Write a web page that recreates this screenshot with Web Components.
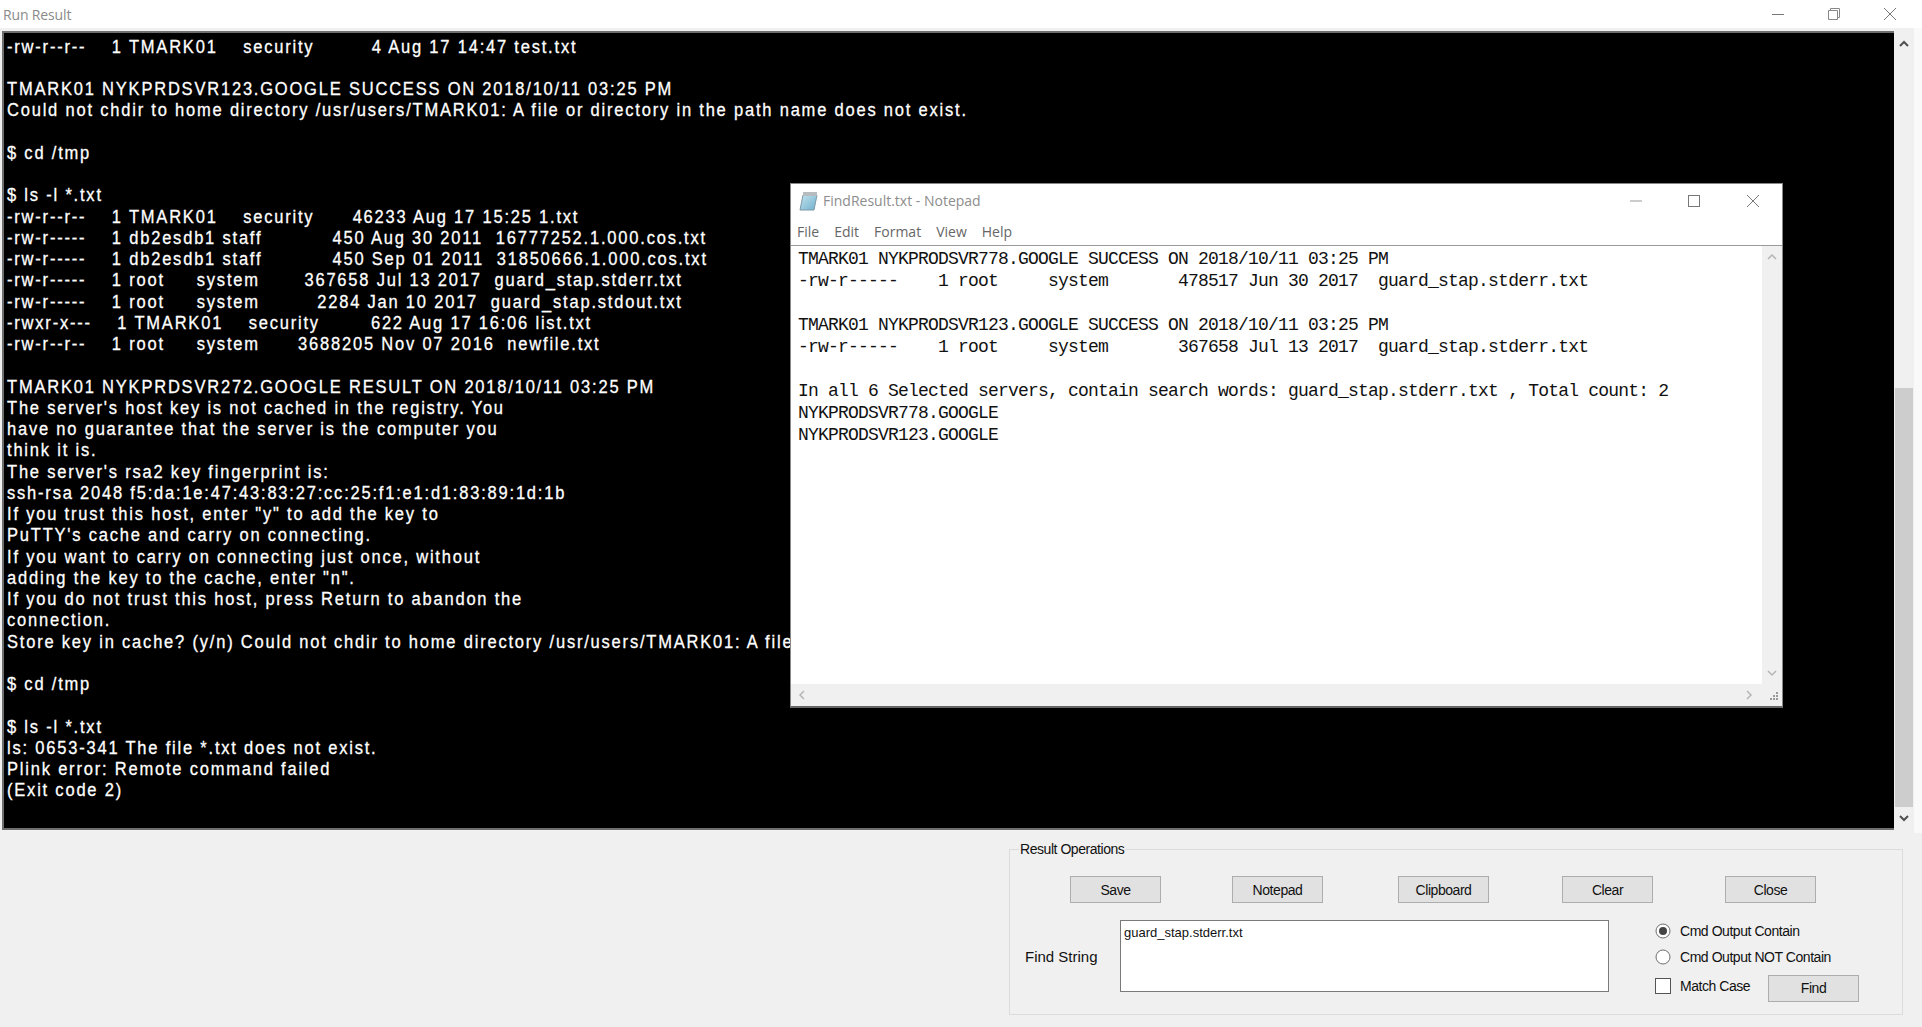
<!DOCTYPE html>
<html>
<head>
<meta charset="utf-8">
<title>Run Result</title>
<style>
  html, body { margin: 0; padding: 0; height: 100%; overflow: hidden; background: #fff; }
</style>
</head>
<body>
<run-result-app>
  <console-output slot="console">-rw-r--r--    1 TMARK01    security         4 Aug 17 14:47 test.txt

TMARK01 NYKPRDSVR123.GOOGLE SUCCESS ON 2018/10/11 03:25 PM
Could not chdir to home directory /usr/users/TMARK01: A file or directory in the path name does not exist.

$ cd /tmp

$ ls -l *.txt
-rw-r--r--    1 TMARK01    security      46233 Aug 17 15:25 1.txt
-rw-r-----    1 db2esdb1 staff           450 Aug 30 2011  16777252.1.000.cos.txt
-rw-r-----    1 db2esdb1 staff           450 Sep 01 2011  31850666.1.000.cos.txt
-rw-r-----    1 root     system       367658 Jul 13 2017  guard_stap.stderr.txt
-rw-r-----    1 root     system         2284 Jan 10 2017  guard_stap.stdout.txt
-rwxr-x---    1 TMARK01    security        622 Aug 17 16:06 list.txt
-rw-r--r--    1 root     system      3688205 Nov 07 2016  newfile.txt

TMARK01 NYKPRDSVR272.GOOGLE RESULT ON 2018/10/11 03:25 PM
The server's host key is not cached in the registry. You
have no guarantee that the server is the computer you
think it is.
The server's rsa2 key fingerprint is:
ssh-rsa 2048 f5:da:1e:47:43:83:27:cc:25:f1:e1:d1:83:89:1d:1b
If you trust this host, enter "y" to add the key to
PuTTY's cache and carry on connecting.
If you want to carry on connecting just once, without
adding the key to the cache, enter "n".
If you do not trust this host, press Return to abandon the
connection.
Store key in cache? (y/n) Could not chdir to home directory /usr/users/TMARK01: A file

$ cd /tmp

$ ls -l *.txt
ls: 0653-341 The file *.txt does not exist.
Plink error: Remote command failed
(Exit code 2)</console-output>
  <notepad-window slot="notepad">TMARK01 NYKPRODSVR778.GOOGLE SUCCESS ON 2018/10/11 03:25 PM
-rw-r-----    1 root     system       478517 Jun 30 2017  guard_stap.stderr.txt

TMARK01 NYKPRODSVR123.GOOGLE SUCCESS ON 2018/10/11 03:25 PM
-rw-r-----    1 root     system       367658 Jul 13 2017  guard_stap.stderr.txt

In all 6 Selected servers, contain search words: guard_stap.stderr.txt , Total count: 2
NYKPRODSVR778.GOOGLE
NYKPRODSVR123.GOOGLE</notepad-window>
  <result-operations slot="panel"></result-operations>
</run-result-app>

<script>
const UI_FONT = '"Liberation Sans", Arial, sans-serif';

const chevrons = {
  up: 'M2 8 L6 4 L10 8',
  down: 'M2 4 L6 8 L10 4',
  left: 'M8 2 L4 6 L8 10',
  right: 'M4 2 L8 6 L4 10',
};

function chevron(dir, color, weight) {
  return `<svg width="12" height="12" viewBox="0 0 12 12"><path d="${chevrons[dir]}" fill="none" stroke="${color}" stroke-width="${weight}"/></svg>`;
}

class RunResultApp extends HTMLElement {
  constructor() {
    super();
    this.attachShadow({ mode: 'open' });
    this.shadowRoot.innerHTML = `
      <style>
        :host {
          display: flex;
          flex-direction: column;
          position: relative;
          width: 1922px;
          height: 1027px;
          overflow: hidden;
          background: #f0f0f0;
          font-family: ${UI_FONT};
        }
        .title {
          flex: none;
          height: 28px;
          background: #fff;
          display: flex;
          align-items: center;
          padding-left: 3px;
          font-size: 14px;
          letter-spacing: -0.15px;
          color: #8a8a8a;
          font-family: "Open Sans", sans-serif;
        }
        .title span { flex: 1; }
        .ctl { width: 14px; height: 14px; display: block; }
        .ctl.min { margin-right: 42px; }
        .ctl.max { margin-right: 42px; }
        .ctl.close { margin-right: 25px; }
        .main {
          flex: none;
          height: 802px;
          display: flex;
          padding: 3px 0 0 2px;
          box-sizing: content-box;
          background: linear-gradient(to right, #f0f0f0 1914px, #f9f9f9 1914px);
        }
        .rest { flex: 1; min-height: 0; }
        .notepad-layer {
          position: absolute;
          left: 790px;
          top: 183px;
        }
      </style>
      <div class="title">
        <span>Run Result</span>
        <svg class="ctl min" viewBox="0 0 14 14"><path d="M1 7.5 H13" stroke="#777" stroke-width="1"/></svg>
        <svg class="ctl max" viewBox="0 0 14 14"><path d="M1.5 3.5 H10.5 V12.5 H1.5 Z M3.5 3.5 V1.5 H12.5 V10.5 H10.5" fill="none" stroke="#888" stroke-width="1"/></svg>
        <svg class="ctl close" viewBox="0 0 14 14"><path d="M1 1 L13 13 M13 1 L1 13" stroke="#777" stroke-width="1"/></svg>
      </div>
      <div class="main"><slot name="console"></slot></div>
      <div class="rest"><slot name="panel"></slot></div>
      <div class="notepad-layer"><slot name="notepad"></slot></div>
    `;
  }
}

class ConsoleOutput extends HTMLElement {
  constructor() {
    super();
    this.attachShadow({ mode: 'open' });
    this.shadowRoot.innerHTML = `
      <style>
        :host {
          display: flex;
          width: 1912px;
          height: 799px;
          font-size: 0;
        }
        .screen {
          flex: none;
          width: 1887px;
          height: 791.5px;
          background: #000;
          border: 2px solid #6f6f6f;
          border-right: 0;
          overflow: hidden;
          padding: 3.5px 0 0 3px;
          margin: 0;
        }
        .line {
          height: 21.25px;
          color: #fff;
          font: 18px/21.25px "Liberation Sans", Arial, sans-serif;
          letter-spacing: 1.96px;
          white-space: pre;
          transform: scaleX(0.9167);
          transform-origin: 0 0;
          -webkit-text-stroke: 0.3px #fff;
        }
      </style>
      <div class="screen"></div>
      <scroll-bar thumb-top="357" thumb-height="419"></scroll-bar>
    `;
  }

  connectedCallback() {
    // one box per line, the text comes from the element's own content
    const screen = this.shadowRoot.querySelector('.screen');
    this.textContent.split('\n').forEach((text) => {
      const line = document.createElement('div');
      line.className = 'line';
      line.textContent = text;
      screen.appendChild(line);
    });
  }
}

class ScrollBar extends HTMLElement {
  constructor() {
    super();
    this.attachShadow({ mode: 'open' });
    const top = this.getAttribute('thumb-top');
    const h = this.getAttribute('thumb-height');
    this.shadowRoot.innerHTML = `
      <style>
        :host {
          display: block;
          position: relative;
          width: 20px;
          height: 799px;
          background: #f0f0f0;
        }
        .thumb {
          position: absolute;
          left: 1px;
          width: 18px;
          top: ${top}px;
          height: ${h}px;
          background: #cdcdcd;
        }
        .arrow { position: absolute; left: 4px; font-size: 0; }
        .arrow.up { top: 7px; }
        .arrow.down { bottom: 6px; }
      </style>
      <div class="arrow up">${chevron('up', '#505050', 2)}</div>
      <div class="thumb"></div>
      <div class="arrow down">${chevron('down', '#505050', 2)}</div>
    `;
  }
}

class NotepadWindow extends HTMLElement {
  constructor() {
    super();
    this.attachShadow({ mode: 'open' });
    this.shadowRoot.innerHTML = `
      <style>
        :host {
          display: flex;
          flex-direction: column;
          width: 993px;
          height: 525px;
          box-sizing: border-box;
          background: #fff;
          border: 1px solid #888;
          border-bottom: 2px solid #666;
          font-family: ${UI_FONT};
        }
        .title {
          flex: none;
          height: 33px;
          display: flex;
          align-items: center;
          padding-left: 8px;
          font-size: 14px;
          color: #8d8d8d;
          font-family: "Open Sans", sans-serif;
        }
        .title svg.icon { width: 19px; height: 20px; margin-right: 5px; }
        .title .name { flex: 1; }
        .ctl { width: 16px; height: 16px; display: block; }
        .ctl.min { margin-right: 42px; }
        .ctl.max { margin-right: 43px; }
        .ctl.close { margin-right: 21px; }
        .menu {
          flex: none;
          height: 29px;
          box-sizing: border-box;
          display: flex;
          align-items: center;
          gap: 15px;
          padding: 0 0 0 6px;
          font-size: 14px;
          color: #666;
          border-bottom: 1px solid #9a9a9a;
          font-family: "Open Sans", sans-serif;
        }
        .body { flex: 1; min-height: 0; display: flex; }
        .edit {
          flex: 1;
          min-width: 0;
          overflow: hidden;
          padding: 2px 0 0 7px;
          font: 18px/22px "Liberation Mono", "DejaVu Sans Mono", monospace;
          letter-spacing: -0.8px;
          color: #111;
          white-space: pre;
        }
        .vbar {
          flex: none;
          width: 20px;
          background: #f0f0f0;
          display: flex;
          flex-direction: column;
          justify-content: space-between;
          align-items: center;
          padding: 5px 0;
          box-sizing: border-box;
        }
        .hbar {
          flex: none;
          height: 22px;
          background: #f0f0f0;
          display: flex;
          align-items: center;
          justify-content: space-between;
          padding: 0 27px 0 5px;
          position: relative;
        }
        .grip { position: absolute; right: 3px; bottom: 3px; width: 12px; height: 12px; }
      </style>
      <div class="title">
        <svg class="icon" viewBox="0 0 19 20">
          <defs>
            <linearGradient id="page" x1="0" y1="0" x2="1" y2="1">
              <stop offset="0" stop-color="#c4e3ef"/>
              <stop offset="1" stop-color="#6fb0cc"/>
            </linearGradient>
          </defs>
          <path d="M4 4 H18 L15 19 H1 Z" fill="url(#page)" stroke="#7d99a6" stroke-width="1"/>
          <path d="M4 1 H18 V5 H4 Z" fill="#e3e6e8"/>
          <path d="M5 1 V5 M7 1 V5 M9 1 V5 M11 1 V5 M13 1 V5 M15 1 V5 M17 1 V5" stroke="#8b9297" stroke-width="1"/>
        </svg>
        <span class="name">FindResult.txt - Notepad</span>
        <svg class="ctl min" viewBox="0 0 16 16"><path d="M2 8 H14" stroke="#999" stroke-width="1"/></svg>
        <svg class="ctl max" viewBox="0 0 16 16"><rect x="2.5" y="2.5" width="11" height="11" fill="none" stroke="#777"/></svg>
        <svg class="ctl close" viewBox="0 0 16 16"><path d="M2 2 L14 14 M14 2 L2 14" stroke="#777" stroke-width="1"/></svg>
      </div>
      <div class="menu"><span>File</span><span>Edit</span><span>Format</span><span>View</span><span>Help</span></div>
      <div class="body">
        <div class="edit"><slot></slot></div>
        <div class="vbar">${chevron('up', '#b5b5b5', 1.5)}${chevron('down', '#b5b5b5', 1.5)}</div>
      </div>
      <div class="hbar">
        ${chevron('left', '#b5b5b5', 1.5)}${chevron('right', '#b5b5b5', 1.5)}
        <svg class="grip" viewBox="0 0 12 12" fill="#9a9a9a">
          <rect x="9" y="1" width="2" height="2"/><rect x="6" y="4" width="2" height="2"/><rect x="9" y="4" width="2" height="2"/>
          <rect x="3" y="7" width="2" height="2"/><rect x="6" y="7" width="2" height="2"/><rect x="9" y="7" width="2" height="2"/>
        </svg>
      </div>
    `;
  }
}

class WinButton extends HTMLElement {
  constructor() {
    super();
    this.attachShadow({ mode: 'open' });
    this.shadowRoot.innerHTML = `
      <style>
        :host {
          display: flex;
          align-items: center;
          justify-content: center;
          flex: none;
          width: 91px;
          height: 27px;
          box-sizing: border-box;
          background: #e1e1e1;
          border: 1px solid #adadad;
          color: #111;
        }
      </style>
      <slot></slot>
    `;
  }
}

class ResultOperations extends HTMLElement {
  constructor() {
    super();
    this.attachShadow({ mode: 'open' });
    this.shadowRoot.innerHTML = `
      <style>
        :host {
          display: block;
          padding: 9px 19px 0 1009px;
          font: 14px "Liberation Sans", Arial, sans-serif;
          letter-spacing: -0.45px;
          color: #111;
        }
        fieldset {
          margin: 0;
          padding: 0;
          width: 894px;
          height: 173px;
          box-sizing: border-box;
          border: 1px solid #dcdcdc;
        }
        legend { margin-left: 9px; padding: 0 1px; line-height: 14px; }
        .buttons {
          display: grid;
          grid-template-columns: 162px 166px 164px 163px 91px;
          padding: 20px 0 0 60px;
        }
        .find {
          display: flex;
          padding: 17px 0 0 15px;
        }
        .label {
          width: 95px;
          margin-top: 29px;
          font-size: 15px;
          line-height: 16px;
          letter-spacing: 0;
        }
        .box {
          flex: none;
          width: 489px;
          height: 72px;
          box-sizing: border-box;
          background: #fff;
          border: 1px solid #7a7a7a;
          padding: 4px 3px;
          font-size: 13px;
          letter-spacing: 0;
        }
        .options { flex: none; width: 204px; margin-left: 46px; display: flex; flex-direction: column; }
        .opt { display: flex; align-items: center; gap: 9px; }
        .opt.a { height: 22px; }
        .opt.b { height: 26px; margin-top: 2px; }
        .opt.c { height: 26px; margin-top: 5px; }
        .opt.c svg, .opt.c span { margin-top: -5px; }
        .opt.c win-button { margin-left: auto; }
        svg { flex: none; display: block; }
      </style>
      <fieldset>
        <legend>Result Operations</legend>
        <div class="buttons">
          <win-button>Save</win-button>
          <win-button>Notepad</win-button>
          <win-button>Clipboard</win-button>
          <win-button>Clear</win-button>
          <win-button>Close</win-button>
        </div>
        <div class="find">
          <div class="label">Find String</div>
          <div class="box">guard_stap.stderr.txt</div>
          <div class="options">
            <div class="opt a">
              <svg width="16" height="16" viewBox="0 0 16 16"><circle cx="8" cy="8" r="7" fill="#fff" stroke="#6e6e6e"/><circle cx="8" cy="8" r="4" fill="#444"/></svg>
              <span>Cmd Output Contain</span>
            </div>
            <div class="opt b">
              <svg width="16" height="16" viewBox="0 0 16 16"><circle cx="8" cy="8" r="7" fill="#fff" stroke="#6e6e6e"/></svg>
              <span>Cmd Output NOT Contain</span>
            </div>
            <div class="opt c">
              <svg width="16" height="16" viewBox="0 0 16 16"><rect x="0.5" y="0.5" width="15" height="15" fill="#fff" stroke="#555"/></svg>
              <span>Match Case</span>
              <win-button>Find</win-button>
            </div>
          </div>
        </div>
      </fieldset>
    `;
  }
}

customElements.define('scroll-bar', ScrollBar);
customElements.define('win-button', WinButton);
customElements.define('console-output', ConsoleOutput);
customElements.define('notepad-window', NotepadWindow);
customElements.define('result-operations', ResultOperations);
customElements.define('run-result-app', RunResultApp);
</script>
</body>
</html>
